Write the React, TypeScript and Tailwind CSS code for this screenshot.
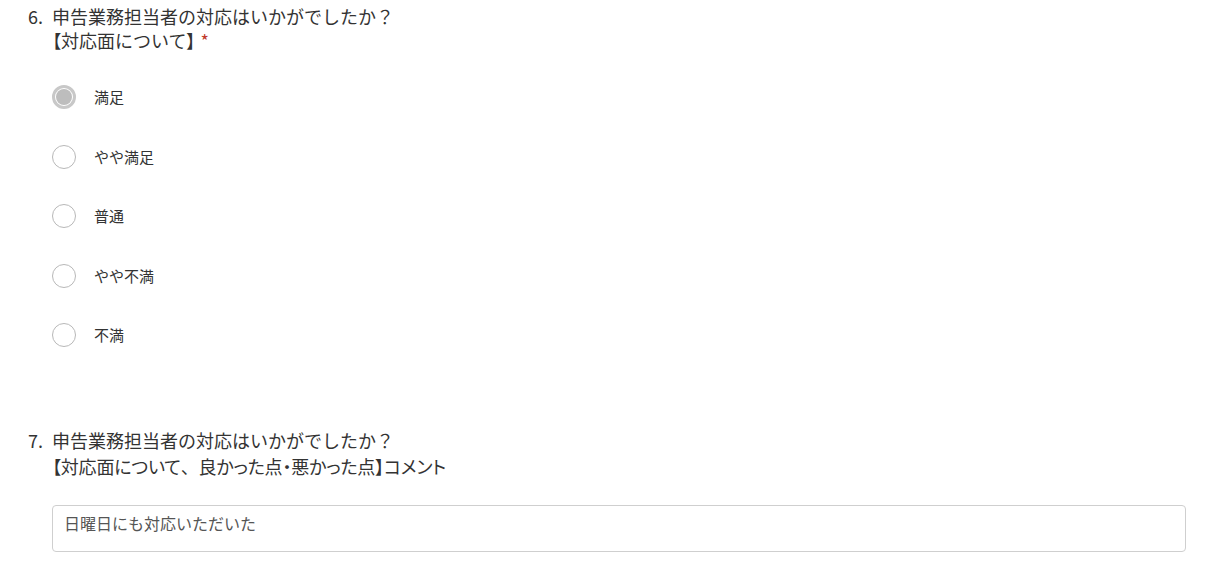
import React from "react";

const font = { fontFamily: '"Noto Sans CJK JP", "Noto Sans", sans-serif' };

const options = ["満足", "やや満足", "普通", "やや不満", "不満"];

function P({ children }: { children: React.ReactNode }) {
  return <span className="[font-feature-settings:'palt']">{children}</span>;
}

export default function App() {
  return (
    <div className="w-[1205px] h-[577px] bg-white text-[#333] overflow-hidden" style={font}>
      <div className="pl-[28px] pr-[19px]">
        <div className="flex text-[18px] leading-[24px] pt-[4px]">
          <div className="w-[24px] shrink-0">6.</div>
          <div>
            <div>申告業務担当者の対応はいかがでしたか？</div>
            <div>
              <P>【</P>対応面について<P>】</P>
              <span className="text-[#c0392b] ml-[5px]">*</span>
            </div>
          </div>
        </div>
        <div className="pl-[24px] pt-[15.5px] flex flex-col">
          {options.map((o, i) => (
            <div key={o} className="h-[59.5px] flex items-center">
              {i === 0 ? (
                <div className="w-[24px] h-[24px] rounded-full border-[3px] border-[#c8c8c8] bg-white flex items-center justify-center">
                  <div className="w-[16px] h-[16px] rounded-full bg-[#bdbdbd]" />
                </div>
              ) : (
                <div className="w-[24px] h-[24px] rounded-full border border-[#b8b8b8] bg-white" />
              )}
              <span className="ml-[18px] text-[15px] leading-[20px]">{o}</span>
            </div>
          ))}
        </div>
        <div className="flex text-[18px] leading-[26px] mt-[62px]">
          <div className="w-[24px] shrink-0">7.</div>
          <div>
            <div>申告業務担当者の対応はいかがでしたか？</div>
            <div className="tracking-[-0.2px]">
              <P>【対応面について</P>、<P>良かった点・悪かった点】コメント</P>
            </div>
          </div>
        </div>
        <div className="ml-[24px] mt-[26px] h-[47px] border border-[#cfcfcf] rounded-[4px] px-[11px] pt-[6px] text-[16px] leading-[22px] text-[#555]">
          日曜日にも対応いただいた
        </div>
      </div>
    </div>
  );
}
